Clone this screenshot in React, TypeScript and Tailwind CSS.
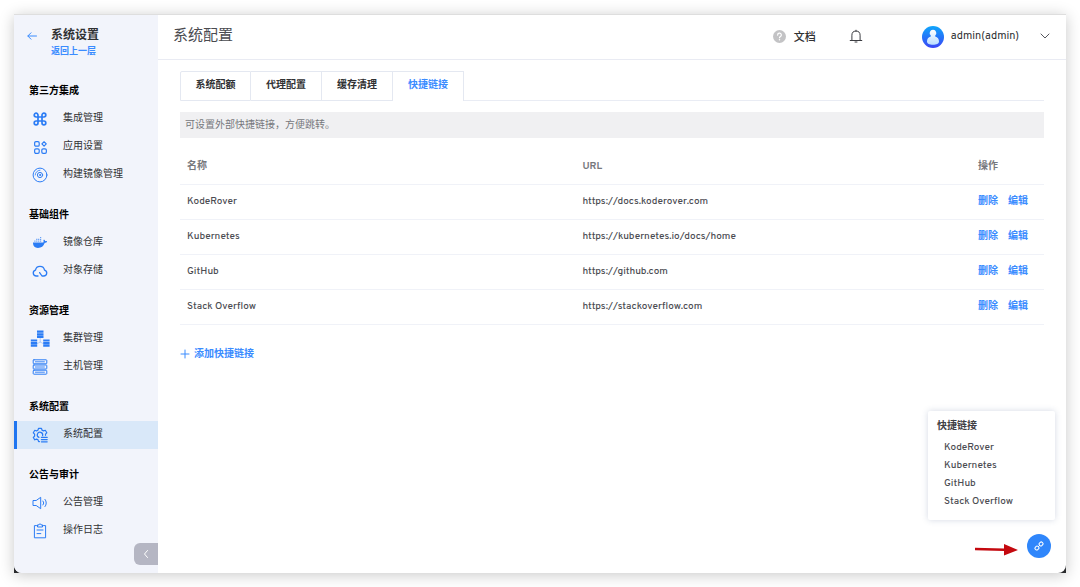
import React, { useState } from 'react';
import clsx from 'clsx';

interface MenuItem {
  name: string;
  icon: React.ReactNode;
}

interface MenuGroup {
  title: string;
  items: MenuItem[];
}

const Svg = ({ children, size = 16, viewBox = '0 0 16 16' }: { children: React.ReactNode; size?: number; viewBox?: string }) => (
  <svg
    width={size}
    height={size}
    viewBox={viewBox}
    fill="none"
    stroke="currentColor"
    strokeWidth="1"
    strokeLinecap="round"
    strokeLinejoin="round"
    aria-hidden="true"
  >
    {children}
  </svg>
);

const CommandIcon = () => (
  <Svg size={14} viewBox="0 0 14 14">
    <path
      strokeWidth="1.7"
      d="M5 5V3.1A1.9 1.9 0 1 0 3.1 5H10.9A1.9 1.9 0 1 0 9 3.1V10.9A1.9 1.9 0 1 0 10.9 9H3.1A1.9 1.9 0 1 0 5 10.9Z"
    />
  </Svg>
);

const AppsIcon = () => (
  <Svg size={13} viewBox="0 0 12 12">
    <rect x="0.6" y="0.6" width="4.2" height="4.2" rx="1.2" strokeWidth="1.1" />
    <path d="M9.3 0.7 11.3 2.7 9.3 4.7 7.3 2.7Z" strokeWidth="1.1" />
    <rect x="0.6" y="7.2" width="4.2" height="4.2" rx="1.2" strokeWidth="1.1" />
    <rect x="7.2" y="7.2" width="4.2" height="4.2" rx="1.2" strokeWidth="1.1" />
  </Svg>
);

const DiscIcon = () => (
  <Svg>
    <circle cx="8" cy="8" r="6.9" />
    <circle cx="8" cy="8" r="2.6" />
    <circle cx="8" cy="8" r="0.5" fill="currentColor" />
    <path strokeWidth="0.8" d="M3.2 8A4.8 4.8 0 0 1 8 3.2" />
  </Svg>
);

const WhaleIcon = () => (
  <Svg>
    <path
      fill="currentColor"
      stroke="none"
      d="M1 7.6H11.2C11.7 7 11.7 6 11.4 5.2L12 4.6C12.7 5 13.1 5.6 13.2 6.2 13.9 6 14.6 6.1 15.1 6.4 14.7 7.4 13.9 7.8 12.8 7.8 11.6 11.2 9.3 13 6 13 2.6 13 1 11 1 7.6Z"
    />
    <path
      fill="currentColor"
      stroke="none"
      opacity="0.7"
      d="M2.3 5.6h1.2v1.2H2.3zM4.2 5.6h1.2v1.2H4.2zM6.1 5.6h1.2v1.2H6.1zM8 5.6h1.2v1.2H8zM4.2 3.7h1.2v1.2H4.2zM6.1 3.7h1.2v1.2H6.1zM8 3.7h1.2v1.2H8zM8 1.9h1.2V3H8z"
    />
  </Svg>
);

const CloudIcon = () => (
  <Svg>
    <path
      strokeWidth="1.3"
      d="M6 13H4.3A3 3 0 0 1 3.5 7.1C3.9 4.8 5.6 3.4 8 3.4S12.1 4.8 12.5 7.1A3 3 0 0 1 11.7 13H10L7.6 9.6"
    />
  </Svg>
);

const ClusterIcon = () => (
  <Svg size={20} viewBox="0 0 20 20">
    <path
      fill="currentColor"
      stroke="none"
      d="M7 1.6h6.5v2.2H7zM7 4.2h6.5v2.2H7zM7 6.8h6.5V9H7zM.8 10.4h6.4v2.2H.8zM.8 13h6.4v2.2H.8zM.8 15.6h6.4v2.2H.8zM13.2 10.4h6.4v2.2h-6.400zM13.2 13h6.4v2.2h-6.400zM13.2 15.6h6.4v2.2h-6.400z"
    />
    <path strokeWidth="0.5" opacity="0.6" d="M10.2 9v4M7.5 14.5 10.2 13 13 14.5" />
  </Svg>
);

const HostIcon = () => (
  <Svg>
    <rect x="1.2" y="0.8" width="13.6" height="4" rx="0.7" />
    <rect x="1.2" y="6" width="13.6" height="4" rx="0.7" />
    <rect x="1.2" y="11.2" width="13.6" height="4" rx="0.7" />
    <path strokeWidth="0.9" d="M3.4 2.8h9M3.4 8h9M3.4 13.2h9" />
  </Svg>
);

const GearIcon = () => (
  <Svg>
    <path
      strokeWidth="1.2"
      d="M7.5 14.6H6.6L6 12.8 4.6 12.1 2.8 12.8 1.3 10.5 2.6 9.1V7.2L1.3 5.8 2.8 3.3 4.6 3.9 6 3.1 6.5 1.3H9.5L10 3.1 11.5 3.9 13.3 3.3 14.8 5.8 13.5 7.2V8.3"
    />
    <path strokeWidth="1.2" d="M6.9 10.4A2.7 2.7 0 1 1 10.6 8.6M9.4 10.4H15.2M9.4 12.6H15.2M9.4 14.8H15.2" />
  </Svg>
);

const SpeakerIcon = () => (
  <Svg>
    <path d="M1.4 5.5H4.2L8.7 2.3V13.7L4.2 10.5H1.4Z" />
    <path d="M11 6A3 3 0 0 1 11 10M13 4.4A5.4 5.4 0 0 1 13 11.6" />
  </Svg>
);

const ClipboardIcon = () => (
  <Svg>
    <path d="M4.5 2.6H2.4V14.8H13.6V2.6H11.5" />
    <path d="M5.5 3.6V1.9H7A1 1 0 0 1 9 1.9H10.5V3.6Z" />
    <path d="M5 7H11M5 10.6H8.8" />
  </Svg>
);

const menu: MenuGroup[] = [
  {
    title: '第三方集成',
    items: [
      { name: '集成管理', icon: <CommandIcon /> },
      { name: '应用设置', icon: <AppsIcon /> },
      { name: '构建镜像管理', icon: <DiscIcon /> },
    ],
  },
  {
    title: '基础组件',
    items: [
      { name: '镜像仓库', icon: <WhaleIcon /> },
      { name: '对象存储', icon: <CloudIcon /> },
    ],
  },
  {
    title: '资源管理',
    items: [
      { name: '集群管理', icon: <ClusterIcon /> },
      { name: '主机管理', icon: <HostIcon /> },
    ],
  },
  { title: '系统配置', items: [{ name: '系统配置', icon: <GearIcon /> }] },
  {
    title: '公告与审计',
    items: [
      { name: '公告管理', icon: <SpeakerIcon /> },
      { name: '操作日志', icon: <ClipboardIcon /> },
    ],
  },
];

const tabs = ['系统配额', '代理配置', '缓存清理', '快捷链接'];

const links = [
  { name: 'KodeRover', url: 'https://docs.koderover.com' },
  { name: 'Kubernetes', url: 'https://kubernetes.io/docs/home' },
  { name: 'GitHub', url: 'https://github.com' },
  { name: 'Stack Overflow', url: 'https://stackoverflow.com' },
];

const Sidebar = () => {
  const [active, setActive] = useState('系统配置');

  return (
    <aside className="relative w-36 shrink-0 bg-[#f2f4fb]">
      <div className="flex h-16 pt-3 pl-3">
        <a href="#back" aria-label="返回" className="mt-[3px] text-[#3b8cff]">
          <Svg size={12} viewBox="0 0 12 12">
            <path d="M10.5 6H2M5 2.8 1.8 6 5 9.2" />
          </Svg>
        </a>
        <div className="ml-[13px] flex flex-col">
          <span className="text-[12px] leading-[18px] font-bold text-[#303133]">系统设置</span>
          <a href="#back" className="text-[9px] leading-[14px] font-bold text-[#3b8cff]">返回上一层</a>
        </div>
      </div>
      <nav className="flex flex-col gap-[14px]">
        {menu.map(group => (
          <div key={group.title}>
            <h2 className="h-[26px] pl-[15px] text-[10px] leading-[26px] font-bold text-black">{group.title}</h2>
            {group.items.map(item => (
              <a
                key={item.name}
                href="#menu"
                onClick={() => setActive(item.name)}
                className={clsx(
                  'flex h-7 items-center border-l-3 pl-[13px] text-[10px] text-[#303133]',
                  active === item.name ? 'border-[#1f75f0] bg-[#d9e8f9]' : 'border-transparent'
                )}
              >
                <span className="mr-[13px] flex w-5 justify-center text-[#2b7cf5]">{item.icon}</span>
                <span className="pb-px">{item.name}</span>
              </a>
            ))}
          </div>
        ))}
      </nav>
      <button aria-label="收起" className="absolute right-0 bottom-2 flex h-[22px] w-6 items-center justify-center rounded-l-md bg-[#b5b6c3] text-white">
        <Svg size={12} viewBox="0 0 12 12">
          <path d="M7.5 2.5 4.5 6 7.5 9.5" />
        </Svg>
      </button>
    </aside>
  );
};

const Header = () => (
  <header className="flex h-[45px] items-center border-b border-[#e9ebf3] pr-[15px] pb-px pl-[15px]">
    <h1 className="pt-0.5 text-[15px] text-[#4a4b50]">系统配置</h1>
    <a href="#docs" className="ml-auto flex items-center gap-2 text-[11px] font-medium text-[#303133]">
      <svg width="13" height="13" viewBox="0 0 12 12" fill="none" aria-hidden="true">
        <circle cx="6" cy="6" r="6" fill="#c3c3c5" />
        <path d="M4.3 4.7A1.7 1.7 0 1 1 6.7 6.1Q6 6.4 6 7.1" stroke="#fff" strokeWidth="1.1" strokeLinecap="round" />
        <circle cx="6" cy="8.9" r="0.7" fill="#fff" />
      </svg>
      <span className="pt-1">文档</span>
    </a>
    <button aria-label="通知" className="ml-[33px] pb-0.5 text-[#3c3d42]">
      <Svg size={14} viewBox="0 0 14 14">
        <path d="M1.2 11.5H12.8M2.9 11.5V6.2A4.1 4.1 0 0 1 11.1 6.2V11.5M7 2V1.2M6 13H8" />
      </Svg>
    </button>
    <button className="ml-[59px] flex items-center text-[#303133]">
      <svg width="22" height="22" viewBox="0 0 22 22" aria-hidden="true">
        <defs>
          <linearGradient id="avatar" x1="0" y1="0" x2="0" y2="1">
            <stop offset="0" stopColor="#0fa6fb" />
            <stop offset="1" stopColor="#3a45f5" />
          </linearGradient>
          <linearGradient id="person" x1="0" y1="0" x2="0" y2="1">
            <stop offset="0" stopColor="#ffffff" />
            <stop offset="1" stopColor="#b9dcff" />
          </linearGradient>
        </defs>
        <circle cx="11" cy="11" r="11" fill="url(#avatar)" />
        <path
          fill="url(#person)"
          d="M11 3.8a3.3 3.3 0 0 1 2.2 5.8v1C15.7 11.2 17 13 17 15.6 17 17.8 14.5 18.8 11 18.8S5 17.8 5 15.6C5 13 6.3 11.2 8.8 10.6v-1A3.3 3.3 0 0 1 11 3.8Z"
        />
      </svg>
      <span className="ml-[7px] text-[11px]">admin(admin)</span>
      <span className="ml-5 pb-0.5 text-[#55565c]">
        <Svg size={12} viewBox="0 0 12 12">
          <path d="M2 4 6 8 10 4" />
        </Svg>
      </span>
    </button>
  </header>
);

const QuickLinks = () => (
  <>
    <div className="absolute right-[11px] bottom-[53px] w-[127px] rounded-xs bg-white px-[9px] pt-[7px] pb-[9px] shadow-[0_0_6px_rgba(60,80,130,0.22)]">
      <h3 className="text-[10px] leading-[18px] font-bold text-[#3f4045]">快捷链接</h3>
      <ul className="pt-[3px] pl-[7px]">
        {links.map(link => (
          <li key={link.name} className="text-[10px] leading-[18px] font-medium text-[#4b4c52]">
            <a href={link.url}>{link.name}</a>
          </li>
        ))}
      </ul>
    </div>
    <div className="absolute right-[15px] bottom-[15px] flex items-center gap-[9px]">
      <svg width="43" height="12" viewBox="0 0 43 12" className="mt-2" aria-hidden="true">
        <path d="M0 3.8 29 4.5V0L43 6 29 11.5V7L0 6.3Z" fill="#c4090f" />
      </svg>
      <button aria-label="快捷链接" className="flex size-6 items-center justify-center rounded-full bg-[#2f86fb] text-white">
        <Svg size={10} viewBox="0 0 12 12">
          <g transform="rotate(-45 6 6)">
            <rect x="0.2" y="4" width="4.6" height="4" rx="1.6" strokeWidth="1.2" />
            <rect x="7.2" y="4" width="4.6" height="4" rx="1.6" strokeWidth="1.2" />
            <path d="M4.8 6H7.2" />
          </g>
        </Svg>
      </button>
    </div>
  </>
);

const App: React.FC = () => {
  const [tab, setTab] = useState('快捷链接');

  return (
    <div className="flex min-h-screen bg-white p-[14px] font-['Overpass','Noto_Sans','Noto_Sans_CJK_SC',sans-serif]">
      <div className="flex flex-1 bg-[#2a2b2e] shadow-[0_2px_14px_rgba(0,0,0,0.22)]">
        <div className="relative flex flex-1 overflow-hidden rounded-b-lg border-t border-[#dedede] bg-white">
          <Sidebar />
          <div className="min-w-0 flex-1">
            <Header />
            <main className="px-[22px] pt-[11px]">
              <div role="tablist" className="flex h-[30px]">
                {tabs.map(name => (
                  <button
                    key={name}
                    role="tab"
                    aria-selected={tab === name}
                    onClick={() => setTab(name)}
                    className={clsx(
                      'w-[71px] border-t border-r border-[#e4e8f1] text-[10px] font-bold first:rounded-tl-xs first:border-l last:rounded-tr-xs',
                      tab === name ? 'pb-0.5 text-[#3b8cff]' : 'border-b pb-px text-[#303133]'
                    )}
                  >
                    {name}
                  </button>
                ))}
                <div className="flex-1 border-b border-[#e9ecf4]" />
              </div>
              <p className="mt-[11px] bg-[#f0f0f2] px-[5px] pt-0.5 text-[10px] leading-6 text-[#77787d]">可设置外部快捷链接，方便跳转。</p>
              <table className="mt-[10px] w-full table-fixed text-left text-[10px] leading-[14px] text-[#4b4c52]">
                <thead>
                  <tr className="h-9 border-b border-[#f0f2f8] text-[#77787d]">
                    <th className="px-[7px] pt-0.5 font-bold">名称</th>
                    <th className="px-[7px] pt-0.5 font-bold">URL</th>
                    <th className="w-[73px] px-[7px] pt-0.5 font-bold">操作</th>
                  </tr>
                </thead>
                <tbody>
                  {links.map(link => (
                    <tr key={link.name} className="h-[35px] border-b border-[#f0f2f8]">
                      <td className="px-[7px] font-medium">{link.name}</td>
                      <td className="px-[7px] font-medium">{link.url}</td>
                      <td className="pl-[7px] font-bold whitespace-nowrap text-[#3b8cff]">
                        <button className="mr-[10px]">删除</button>
                        <button>编辑</button>
                      </td>
                    </tr>
                  ))}
                </tbody>
              </table>
              <button className="mt-5 flex items-center gap-1 text-[10px] leading-5 font-bold text-[#3b8cff]">
                <span className="pb-0.5">
                  <Svg size={10} viewBox="0 0 10 10">
                    <path d="M5 1V9M1 5H9" />
                  </Svg>
                </span>
                添加快捷链接
              </button>
            </main>
          </div>
          <QuickLinks />
        </div>
      </div>
    </div>
  );
};

export default App;
